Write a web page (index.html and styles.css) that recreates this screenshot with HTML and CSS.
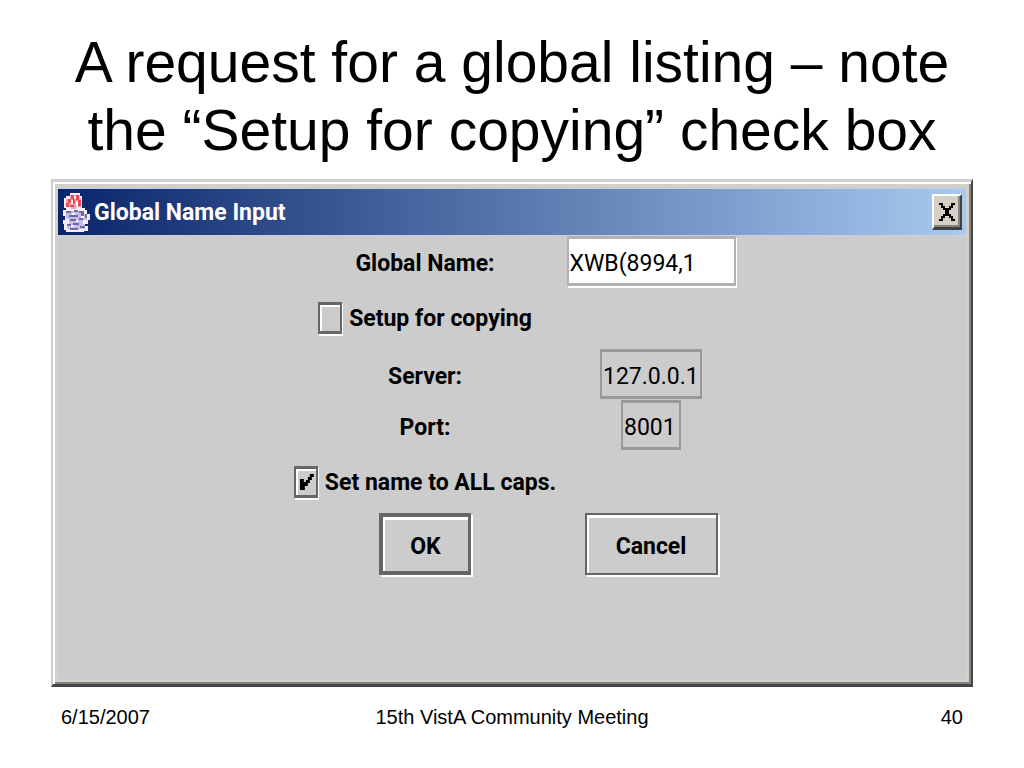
FILE: index.html
```
<!DOCTYPE html>
<html lang="en">

<head>
  <meta charset="UTF-8">
  <title>Global Name Input</title>
  <link rel="stylesheet" href="styles.css">
</head>

<body>
  <div class="slide">
    <h1>A request for a global listing – note<br>the “Setup for copying” check box</h1>

    <div class="window">
      <div class="titlebar">
        <svg class="java" viewBox="0 0 28 39" width="28" height="39" shape-rendering="crispEdges">
          <path fill="#f4eefa" d="M8 0h10v3h2v12h3v2h2v4h3v6h-2v4h-3v2h3v5h-4v1H4v-2H2v-6H1v-4h2v-4H1v-6h3v-2H2V5h2V3h4z" />
          <path fill="#f3a3ae" d="M8 2h10v3h1v9h-5v2H9v-2H4V6h4z" />
          <path fill="#e84858" d="M9 2h3v4H9zM14 2h3v5h-3zM6 6h3v4H6zM16 7h3v6h-3zM4 10h3v4H4zM11 6h2v5h-2zM8 12h4v2H8z" />
          <path fill="#fff" d="M12 3h2v3h-2zM9 7h2v4H9zM14 9h2v4h-2z" />
          <path fill="#c5bde4" d="M4 18h18v3h3v6h-4v4h2v5H5v-5h2v-5H4z" />
          <path fill="#7068b0" d="M4 18h5v2H4zM12 17h4v2h-4zM17 18h5v5h-3v-3h-2zM7 22h9v2H7zM23 21h2v4h-2zM8 26h6v2H8zM17 25h4v2h-4zM5 31h4v2H5zM11 30h6v2h-6zM18 33h5v2h-5zM8 35h8v2H8z" />
          <path fill="#fff" d="M10 20h3v2h-3zM19 23h3v2h-3zM14 27h2v2h-2zM9 32h3v2H9z" />
        </svg>
        <span class="caption">Global Name Input</span>
        <button class="close" type="button" aria-label="Close">
          <svg viewBox="0 0 16 18" width="16" height="18" shape-rendering="crispEdges">
            <path d="M0 0h4v3h2v2h4V3h2V0h4v2h-2v3h-2v2h-2v4h2v2h2v3h2v2h-4v-3h-2v-2H6v2H4v3H0v-2h2v-3h2v-2h2V7H4V5H2V2H0z" />
          </svg>
        </button>
      </div>

      <form class="form">
        <label for="name">Global Name:</label>
        <input class="field name" id="name" type="text" value="XWB(8994,1">

        <label class="check"><input type="checkbox">Setup for copying</label>

        <label class="first" for="server">Server:</label>
        <input class="field server" id="server" type="text" value="127.0.0.1" readonly>

        <label for="port">Port:</label>
        <input class="field port" id="port" type="text" value="8001" readonly>

        <label class="check"><input type="checkbox" checked>Set name to ALL caps.</label>

        <button class="btn ok first" type="button">OK</button>
        <button class="btn cancel" type="button">Cancel</button>
      </form>
    </div>

    <div class="footer">
      <span>6/15/2007</span>
      <span>15th VistA Community Meeting</span>
      <span>40</span>
    </div>
  </div>
</body>

</html>
```
FILE: styles.css
```
* {
  box-sizing: border-box;
}

body {
  margin: 0;
  background: #fff;
  color: #000;
  font-family: "Liberation Sans", Arial, sans-serif;
}

.slide {
  padding: 28px 51px 0;
}

h1 {
  margin: 0 0 15px;
  font-size: 57px;
  line-height: 68px;
  font-weight: normal;
  text-align: center;
  white-space: nowrap;
}

/* dialog */
.window {
  padding: 6px 3px 0;
  min-height: 508px;
  background: #ccc;
  border: solid;
  border-width: 3px 2px 3px 2px;
  border-color: #d0cdc8 #464548 #464548 #d0cdc8;
  box-shadow: inset 2px 2px #fff, inset -2px -2px #858380, inset 5px 5px #d4cfc8, inset -5px -5px #d4cfc8;
  font-family: Roboto, "Liberation Sans", sans-serif;
}

.titlebar {
  display: flex;
  align-items: center;
  height: 48px;
  margin: 0 2px;
  padding: 0 4px;
  border: solid #c8cfe0;
  border-width: 1px 0;
  background: linear-gradient(to right, #0a246a, #a6caf0);
}

.caption {
  flex: 1;
  margin-left: 4px;
  color: #fff;
  font-size: 23px;
  font-weight: bold;
}

button,
input {
  margin: 0;
  font-family: inherit;
  color: #000;
}

.close {
  display: flex;
  align-items: center;
  justify-content: center;
  width: 30px;
  height: 36px;
  padding: 0;
  background: #d4d0c8;
  border: solid;
  border-width: 2px 2px 3px 2px;
  border-color: #fff #404040 #404040 #fff;
  box-shadow: inset -2px -2px #858380;
}

/* form */
.form {
  display: grid;
  grid-template-columns: 266px 186px;
  grid-template-rows: 50px 62px 51px 51px 62px 64px;
  justify-content: center;
  align-items: center;
  justify-items: center;
  padding-left: 12px;
  font-size: 23px;
  font-weight: bold;
}

.form > label {
  padding-top: 5px;
}

.form > .check {
  padding-top: 2px;
}

.field {
  height: 50px;
  padding: 5px 1px 0;
  background: #ccc;
  border: 3px solid #999;
  border-width: 3px 2px;
  font-size: 23px;
}

.name {
  width: 169px;
  background: #fff;
  border-color: #b2b2b2;
  box-shadow: 1px 2px #fff;
}

.server {
  width: 102px;
}

.port {
  width: 60px;
}

.check {
  grid-column: 1;
  display: flex;
  align-items: center;
  gap: 7px;
  white-space: nowrap;
}

.first {
  grid-column: 1;
}

.check input {
  appearance: none;
  width: 24px;
  height: 32px;
  border: 2px solid #666;
  border-width: 3px 2px;
  box-shadow: inset 2px 2px #fff, 1px 2px #fff;
}

.check input:checked {
  position: relative;
}

.check input:checked::after {
  content: "";
  position: absolute;
  left: 4px;
  top: 5px;
  width: 14px;
  height: 17px;
  background: #000;
  clip-path: polygon(0 5px, 4px 5px, 4px 8px, 6px 8px, 6px 6px, 8px 6px, 8px 3px, 10px 3px, 10px 0, 14px 0, 14px 3px, 12px 3px, 12px 6px, 10px 6px, 10px 9px, 8px 9px, 8px 12px, 5px 12px, 5px 16px, 0 16px);
}

.btn {
  padding: 4px 0 0;
  background: #ccc;
  border: 2px solid #666;
  box-shadow: inset 2px 3px #fff, 2px 2px #fff;
  font-size: 23px;
  font-weight: bold;
}

.ok {
  width: 92px;
  height: 62px;
  border-width: 4px 3px 4px 4px;
}

.cancel {
  width: 133px;
  height: 62px;
}

.footer {
  display: grid;
  grid-template-columns: 1fr auto 1fr;
  padding: 18px 10px;
  font-size: 20px;
  line-height: 24px;
}

.footer span:last-child {
  text-align: right;
}
```
